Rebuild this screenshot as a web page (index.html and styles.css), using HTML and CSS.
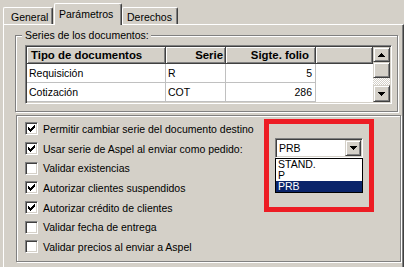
FILE: index.html
```html
<!DOCTYPE html>
<html lang="es">
<head>
  <meta charset="UTF-8">
  <title>Parámetros</title>
  <link rel="stylesheet" href="styles.css">
</head>
<body>
  <div class="tabs">
    <div class="tab tab-general">General</div>
    <div class="tab tab-active">Parámetros</div>
    <div class="tab tab-rights">Derechos</div>
  </div>

  <div class="panel">
    <fieldset class="group">
      <legend>Series de los documentos:</legend>
      <div class="grid">
        <div class="grid-body">
          <div class="grid-row grid-head">
            <div class="cell">Tipo de documentos</div>
            <div class="cell cell-serie">Serie</div>
            <div class="cell cell-folio">Sigte. folio</div>
            <div class="cell"></div>
          </div>
          <div class="grid-row">
            <div class="cell">Requisición</div>
            <div class="cell">R</div>
            <div class="cell cell-num">5</div>
            <div class="cell cell-blank"></div>
          </div>
          <div class="grid-row">
            <div class="cell">Cotización</div>
            <div class="cell">COT</div>
            <div class="cell cell-num">286</div>
            <div class="cell cell-blank"></div>
          </div>
        </div>
        <div class="scrollbar">
          <div class="sb-btn sb-up">
            <svg width="7" height="4" viewBox="0 0 7 4"><path d="M3 0h1v1h1v1h1v1h1v1H0V3h1V2h1V1h1z"/></svg>
          </div>
          <div class="sb-btn sb-thumb"></div>
          <div class="sb-track"></div>
          <div class="sb-btn sb-down">
            <svg width="7" height="4" viewBox="0 0 7 4"><path d="M0 0h7v1H6v1H5v1H4v1H3V3H2V2H1V1H0z"/></svg>
          </div>
        </div>
      </div>
    </fieldset>

    <div class="options">
      <div class="opt">
        <span class="check"><svg width="7" height="7" viewBox="0 0 7 7"><path d="M6 0h1v1H6zM5 1h2v1H5zM0 2h1v1H0zM4 2h3v1H4zM0 3h2v1H0zM3 3h3v1H3zM0 4h5v1H0zM1 5h3v1H1zM2 6h1v1H2z"/></svg></span>
        <span class="opt-label">Permitir cambiar serie del documento destino</span>
      </div>
      <div class="opt">
        <span class="check"><svg width="7" height="7" viewBox="0 0 7 7"><path d="M6 0h1v1H6zM5 1h2v1H5zM0 2h1v1H0zM4 2h3v1H4zM0 3h2v1H0zM3 3h3v1H3zM0 4h5v1H0zM1 5h3v1H1zM2 6h1v1H2z"/></svg></span>
        <span class="opt-label opt-label-fixed">Usar serie de Aspel al enviar como pedido:</span>
        <div class="combo">
          <span class="combo-value">PRB</span>
          <span class="combo-btn">
            <svg width="7" height="4" viewBox="0 0 7 4"><path d="M0 0h7v1H6v1H5v1H4v1H3V3H2V2H1V1H0z"/></svg>
          </span>
          <ul class="combo-list">
            <li>STAND.</li>
            <li>P</li>
            <li class="selected">PRB</li>
          </ul>
        </div>
      </div>
      <div class="opt">
        <span class="check"></span>
        <span class="opt-label">Validar existencias</span>
      </div>
      <div class="opt">
        <span class="check"><svg width="7" height="7" viewBox="0 0 7 7"><path d="M6 0h1v1H6zM5 1h2v1H5zM0 2h1v1H0zM4 2h3v1H4zM0 3h2v1H0zM3 3h3v1H3zM0 4h5v1H0zM1 5h3v1H1zM2 6h1v1H2z"/></svg></span>
        <span class="opt-label">Autorizar clientes suspendidos</span>
      </div>
      <div class="opt">
        <span class="check"><svg width="7" height="7" viewBox="0 0 7 7"><path d="M6 0h1v1H6zM5 1h2v1H5zM0 2h1v1H0zM4 2h3v1H4zM0 3h2v1H0zM3 3h3v1H3zM0 4h5v1H0zM1 5h3v1H1zM2 6h1v1H2z"/></svg></span>
        <span class="opt-label">Autorizar crédito de clientes</span>
      </div>
      <div class="opt">
        <span class="check"></span>
        <span class="opt-label">Validar fecha de entrega</span>
      </div>
      <div class="opt">
        <span class="check"></span>
        <span class="opt-label">Validar precios al enviar a Aspel</span>
      </div>

      <div class="highlight-mark"></div>
    </div>
  </div>
</body>
</html>
```

FILE: styles.css
```css
body {
  margin: 0;
  background: #d4d0c8;
  font-family: "Liberation Sans", Arial, sans-serif;
  font-size: 10.5px;
  color: #000;
  overflow: hidden;
}

/* tab strip */
.tabs {
  display: flex;
  align-items: flex-end;
  height: 24px;
  padding-left: 3px;
  position: relative;
  z-index: 1;
}
.tab {
  height: 17px;
  box-sizing: border-box;
  border-top: 1px solid #fff;
  border-left: 1px solid #fff;
  border-right: 1px solid #404040;
  box-shadow: inset -1px 0 #808080;
  border-radius: 2px 2px 0 0;
  background: #d4d0c8;
  padding: 3px 0 0 4px;
  line-height: 12px;
}
.tab-general {
  width: 50px;
  padding-left: 7px;
}
.tab-active {
  width: 68px;
  height: 22px;
  margin-left: 1px;
  margin-bottom: -1px;
  padding-top: 4px;
}
.tab-rights {
  width: 56px;
}

/* main page */
.panel {
  margin-left: 3px;
  height: 250px;
  box-sizing: border-box;
  border-top: 1px solid #fff;
  border-left: 1px solid #fff;
  border-right: 1px solid #404040;
  box-shadow: inset -1px 0 #808080;
}

.group {
  margin: 4px 0 0 11px;
  width: 383px;
  box-sizing: border-box;
  border: 1px solid #808080;
  box-shadow: inset 1px 1px #fff, 1px 1px #fff;
  padding: 3px 5px 7px 9px;
}
.group legend {
  margin-left: -3px;
  padding: 0 2px 0 3px;
  line-height: 13px;
  background: #d4d0c8;
}

/* series grid */
.grid {
  display: flex;
  width: 367px;
  height: 59px;
  box-sizing: border-box;
  border: 1px solid;
  border-color: #808080 #fff #fff #808080;
  box-shadow: inset 1px 1px #404040, inset -1px -1px #d4d0c8;
  padding: 1px;
}
.grid-body {
  flex: 1;
  background: #fff;
}
.grid-row {
  display: grid;
  grid-template-columns: 139px 60px 90px 1fr;
  height: 19px;
}
.cell {
  box-sizing: border-box;
  border-right: 1px solid #c0c0c0;
  border-bottom: 1px solid #c0c0c0;
  padding: 0 2px;
  line-height: 18px;
  white-space: nowrap;
  overflow: hidden;
}
.cell-num {
  text-align: right;
  padding-right: 3px;
}
.cell-blank {
  border: none;
}
.grid-head {
  height: 17px;
  background: #d4d0c8;
}
.grid-head .cell {
  font-weight: bold;
  font-size: 11.4px;
  line-height: 16px;
  border-right-color: #404040;
  border-bottom-color: #404040;
  box-shadow: inset 1px 1px #fff, inset -1px -1px #808080;
  padding-left: 4px;
}
.grid-head .cell-serie {
  text-align: right;
  padding-right: 2px;
}
.grid-head .cell-folio {
  text-align: right;
  padding-right: 6px;
}

/* scrollbar */
.scrollbar {
  width: 17px;
  display: flex;
  flex-direction: column;
}
.sb-btn {
  box-sizing: border-box;
  background: #d4d0c8;
  border: 1px solid;
  border-color: #d4d0c8 #404040 #404040 #d4d0c8;
  box-shadow: inset 1px 1px #fff, inset -1px -1px #808080;
  display: flex;
  align-items: center;
  justify-content: center;
}
.sb-btn svg {
  display: block;
  shape-rendering: crispEdges;
}
.sb-up {
  height: 15px;
}
.sb-thumb {
  height: 16px;
}
.sb-track {
  height: 7px;
  background: repeating-conic-gradient(#fff 0 25%, #d4d0c8 0 50%) 0 0 / 2px 2px;
}
.sb-down {
  height: 17px;
}

/* option checkboxes */
.options {
  position: relative;
  margin: 3px 0 0 12px;
  width: 385px;
  height: 147px;
  box-sizing: border-box;
  border: 1px solid #808080;
  box-shadow: inset 1px 1px #fff, 1px 1px #fff;
  padding: 3px 0 0 8px;
}
.opt {
  display: flex;
  align-items: center;
  height: 19.7px;
}
.check {
  width: 13px;
  height: 13px;
  box-sizing: border-box;
  border: 1px solid;
  border-color: #808080 #fff #fff #808080;
  box-shadow: inset 1px 1px #404040, inset -1px -1px #d4d0c8;
  background: #fff;
  padding: 2px;
  margin-right: 5px;
  flex: none;
}
.check svg {
  display: block;
  shape-rendering: crispEdges;
}
.opt-label {
  white-space: nowrap;
}
.opt-label-fixed {
  width: 232px;
  flex: none;
}

/* serie combo */
.combo {
  position: relative;
  align-self: flex-start;
  margin-top: -1px;
  width: 88px;
  height: 20px;
  box-sizing: border-box;
  border: 1px solid;
  border-color: #808080 #fff #fff #808080;
  box-shadow: inset 1px 1px #404040, inset -1px -1px #d4d0c8;
  padding: 1px;
  display: flex;
  background: #fff;
}
.combo-value {
  flex: 1;
  padding-left: 2px;
  line-height: 16px;
}
.combo-btn {
  width: 16px;
  height: 16px;
  box-sizing: border-box;
  background: #d4d0c8;
  border: 1px solid;
  border-color: #d4d0c8 #404040 #404040 #d4d0c8;
  box-shadow: inset 1px 1px #fff, inset -1px -1px #808080;
  display: flex;
  align-items: center;
  justify-content: center;
}
.combo-btn svg {
  display: block;
  shape-rendering: crispEdges;
}
.combo-list {
  position: absolute;
  top: calc(100% + 1px);
  left: -1px;
  width: 88px;
  box-sizing: border-box;
  margin: 0;
  padding: 0;
  list-style: none;
  background: #fff;
  border: 1px solid #000;
  z-index: 2;
}
.combo-list li {
  height: 11px;
  line-height: 11px;
  padding-left: 2px;
}
.combo-list .selected {
  background: #0a246a;
  color: #fff;
}

/* red annotation frame */
.highlight-mark {
  position: absolute;
  left: 247px;
  top: 3px;
  width: 110px;
  height: 93px;
  box-sizing: border-box;
  border: 5px solid #ed1c24;
}
```
